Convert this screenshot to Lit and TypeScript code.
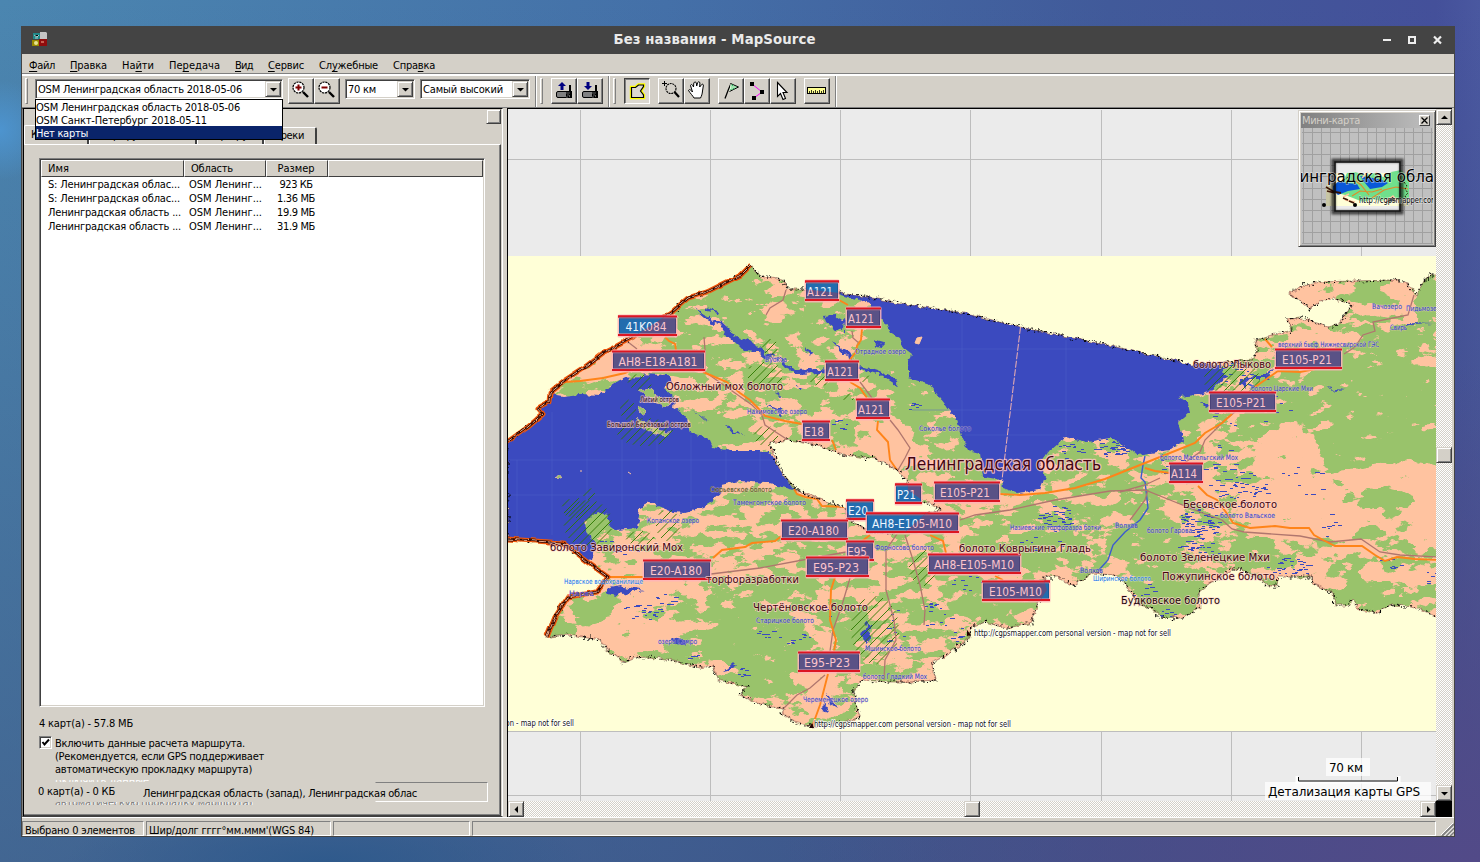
import { LitElement, html, svg, css } from "lit";
import { customElement, property, state, query } from "lit/decorators.js";
import { classMap } from "lit/directives/class-map.js";

/** A caption whose letter spacing is stretched so that it fills an exact width. */
@customElement("fit-text")
class FitText extends LitElement {
  static styles = css`
    :host { display: inline-block; white-space: pre; }
    span { display: inline-block; }
  `;
  @property({ type: Number }) w = 0;
  @state() private gap = 0;
  @query("span") private box!: HTMLSpanElement;
  firstUpdated() {
    const n = (this.textContent ?? "").length;
    if (this.w && n) this.gap = (this.w - this.box.getBoundingClientRect().width) / n;
  }
  render() {
    return html`<span style="letter-spacing:${this.gap}px"><slot></slot></span>`;
  }
}

const LAND = `M507 442L528 427 543 414 538 408 549 402 550 392 565 380 585 367 603 353 615 347 633 337 672 312 688 298 707 292 727 282 741 275 751 265
L760 276 783 280 787 289 803 289 840 293 877 299 917 306 963 313 1020 327 1077 339 1130 350 1180 362 1192 365 1252 360 1257 350 1255 340 1265 338 1292 330 1287 319 1302 318
1327 327 1338 325 1352 305 1333 298 1320 302 1310 308 1290 294 1302 285 1320 282 1353 281 1393 280 1408 284 1417 295 1423 282 1432 274 1440 274
L1440 618 1422 610 1407 606 1393 605 1375 613 1360 610 1352 600 1350 605 1335 605 1333 593 1313 584 1312 577 1278 577 1277 586 1267 586 1260 578 1240 569 1230 569
1228 573 1210 583 1198 593 1200 607 1182 618 1160 617 1152 608 1140 605 1120 577 1112 575 1093 573 1073 585 1057 577 1043 577 1047 590 1037 605 1032 623 1007 628 985 622
972 627 968 640 943 657 933 662 935 680 910 682 890 682 862 680 853 693 860 717 847 722 812 727 793 722 782 713 785 708 773 707 757 703 740 695 747 687 718 680 713 665
700 668 677 662 650 657 633 658 622 663 617 657 607 650 600 640 570 635 547 637L555 617 568 597 597 592 608 577 587 562 563 543 507 539Z`;
const CITY = "M770 443L788 440 810 443 843 455 877 459 897 470 907 480 908 490 922 500 941 509 925 514 905 532 870 532 853 522 845 508 817 498 797 490 780 470Z";
const GULF = "M500 445L528 427 543 414 538 408 549 402 552 394 563 396 580 394 600 395 612 385 620 380 633 374 668 375 672 382 664 389 674 398 673 408 685 415 690 432 710 440 713 447 730 451 770 451 780 470 795 490 765 483 740 481 722 485 720 495 703 508 685 513 673 512 650 503 640 508 637 528 617 530 609 524 607 515 597 512 583 523 588 535 597 542 592 560 587 562 563 543 500 539Z";
const LADOGA = "M838 294L870 303 872 312 886 323 890 332 900 338 904 348 912 354 908 366 908 378 930 385 947 407 957 420 963 440 968 450 980 453 983 477 1002 480 1003 488 1017 493 1040 490 1045 477 1040 463 1050 450 1065 437 1087 442 1110 438 1127 447 1137 455 1170 450 1183 440 1178 423 1190 413 1188 402 1178 397 1197 395 1210 392 1225 378 1222 366 1190 358 1130 346 1077 335 1020 323 963 309 917 302 877 295 840 289Z";
const BORDER_N = "M507 442L528 427 543 414 538 408 549 402 550 392 565 380 585 367 603 353 615 347 633 337 672 312 688 298 707 292 727 282 741 275 751 265";
const BORDER_S = "M547 637L555 617 568 597 597 592 608 577 587 562 563 543 507 539";

const LAKES = [
  "M694 309L713 320 722 322 736 336 748 341 758 344 768 354 776 357 767 358 757 351 744 350 737 343 727 336 720 325 705 319Z",
  "M776 357L787 362 795 370 820 369 840 371 862 366 878 371 892 377 898 385 894 384 880 375 861 369 840 374 820 373 797 374 785 367Z",
  "M704 307L712 310 720 311 719 313 707 311Z", "M822 316L836 315 846 322 845 330 834 329 824 322Z",
  "M690 408L708 422 704 420Z", "M727 427L743 435 732 433Z", "M834 343L850 352 854 360 840 350Z", "M873 341L884 344 883 348 874 346Z",
  "M803 347L812 351 810 356Z", "M775 391L784 397 778 395Z", "M796 385L804 388 799 389Z", "M766 404L780 410 782 416Z",
  "M606 588L620 585 640 589 644 590 625 593 616 598 606 595Z", "M873 624L868 630 872 640 865 644 862 636 866 624Z", "M672 637L688 640 684 645 676 644Z",
  "M722 671L731 664 735 668 728 670Z", "M1326 387L1333 389 1346 390 1336 391Z", "M1392 328L1405 326 1410 322 1433 323 1412 324Z", "M873 705L880 712 874 712Z",
  "M826 694L833 700 838 708 830 703Z", "M823 702L828 712 822 710Z", "M1200 402L1212 404 1206 408Z", "M1241 384L1255 375 1268 375 1272 368 1273 371 1268 378 1254 378 1243 388Z",
];
const ISLANDS = [
  "M627 371L645 372 640 377 630 377Z", "M640 390L650 388 662 398 672 402 668 406 656 404 650 398 643 396Z", "M638 405L644 410 643 416 638 411Z",
  "M637 420L650 425 655 430 671 432 665 435 655 432 641 426Z", "M554 477L560 475 562 478 557 480Z", "M652 429L660 433 655 433Z",
];

/** [cx, cy, rx, ry, forest density 0..1] */
const FOREST: number[][] = [
  [625, 358, 45, 14, 0], [650, 383, 30, 9, 0.1], [575, 393, 14, 7, 0.9], [600, 390, 14, 5, 0.6],
  [715, 307, 40, 14, 0.8], [745, 288, 22, 14, 0.9], [690, 345, 28, 22, 0.7], [760, 330, 35, 24, 0.75], [780, 300, 14, 18, 0.3], [815, 320, 22, 26, 0.7],
  [715, 355, 18, 12, 0.8], [725, 395, 38, 18, 0.55], [720, 432, 38, 17, 0.9], [768, 375, 28, 14, 0.65], [825, 400, 30, 18, 0.7], [770, 432, 20, 10, 0.2],
  [840, 360, 20, 12, 0.5], [850, 315, 18, 12, 0.7], [887, 355, 28, 34, 1], [920, 400, 26, 28, 0.9], [940, 435, 24, 28, 0.75], [968, 465, 18, 18, 0.9],
  [890, 445, 24, 24, 0.05], [920, 455, 14, 14, 0.3], [845, 432, 22, 10, 0.65], [1075, 460, 28, 20, 0.7], [1110, 480, 40, 14, 0.7], [1010, 500, 60, 12, 0.4],
  [745, 485, 30, 6, 0.3], [765, 500, 40, 10, 0.65], [660, 520, 22, 14, 0.3], [700, 535, 40, 14, 0.5], [597, 522, 14, 12, 1], [595, 545, 16, 8, 0.4],
  [640, 560, 40, 10, 0.3], [645, 590, 60, 12, 0.15], [630, 625, 55, 25, 0.1], [560, 630, 16, 10, 0.95], [590, 612, 20, 14, 0.95], [610, 600, 14, 8, 0.7], [660, 615, 24, 10, 0.5], [720, 605, 40, 16, 0.7],
  [740, 570, 25, 7, 0.35], [780, 585, 40, 14, 0.8], [680, 655, 35, 12, 0.75], [755, 640, 55, 32, 0.9], [765, 680, 28, 18, 0.9], [718, 668, 10, 8, 0.1],
  [820, 695, 16, 28, 0.1], [850, 700, 14, 18, 0.65], [825, 540, 30, 14, 0.55], [880, 590, 22, 20, 0.4], [850, 620, 18, 24, 0.75], [910, 610, 22, 28, 0.6],
  [950, 625, 24, 22, 0.5], [910, 665, 40, 10, 0.3], [885, 675, 30, 8, 0.8], [990, 605, 36, 14, 0.9], [960, 585, 24, 12, 0.75], [1000, 540, 34, 14, 0.7],
  [1050, 550, 40, 20, 0.8], [1075, 515, 35, 16, 0.65], [1020, 515, 30, 10, 0.65], [1110, 555, 14, 20, 0.3], [1150, 545, 45, 24, 0.85], [1170, 590, 35, 25, 0.9],
  [1150, 505, 30, 16, 0.65], [1205, 530, 34, 22, 0.5], [1250, 555, 45, 14, 0.8], [1205, 485, 30, 12, 0.3], [1215, 440, 24, 26, 0.5], [1195, 410, 16, 16, 0.95],
  [1240, 370, 24, 16, 0.55], [1280, 425, 40, 16, 0.85], [1300, 395, 50, 22, 0.8], [1360, 375, 46, 34, 0.85], [1400, 420, 60, 60, 0.9], [1350, 445, 34, 26, 0.95],
  [1305, 293, 22, 12, 0], [1370, 288, 20, 14, 0.9], [1395, 290, 12, 14, 0.2], [1430, 300, 14, 26, 0.9], [1355, 335, 18, 12, 0.85], [1325, 338, 36, 8, 0],
  [1400, 335, 22, 14, 0.85], [1385, 320, 18, 10, 0.4], [1289, 450, 30, 24, 0], [1295, 508, 50, 34, 0], [1360, 530, 30, 22, 0.1], [1400, 477, 60, 14, 0],
  [1425, 520, 18, 28, 0], [1385, 500, 28, 12, 0.9], [1370, 535, 18, 7, 0.85], [1320, 570, 24, 8, 0.2], [1395, 550, 20, 7, 0.75], [1370, 597, 50, 10, 0.9],
  [1300, 570, 18, 6, 0.4], [1400, 577, 40, 8, 0.2], [1345, 572, 16, 5, 0.7],
];

const ORANGE = [
  "565,382 580,381 603,378 625,373 640,366", "665,337 669,341 675,344 676,350", "703,372 727,382 740,393 750,400 757,407 765,416 785,421 802,424",
  "839,300 848,305", "862,329 861,340 857,346 856,352 848,362", "850,382 860,388 867,398", "878,421 877,430 888,442 890,460 897,470", "832,440 836,450",
  "1000,494 1020,495 1045,493 1075,488 1105,479 1140,465 1165,455 1195,443 1205,433 1222,423 1232,414", "1255,387 1265,380 1278,371 1300,372 1315,369",
  "1265,339 1272,347", "1145,468 1155,471 1170,473", "1198,486 1207,495 1217,500 1228,515 1233,523 1250,528 1275,526 1290,528 1309,528 1314,535 1325,541 1335,546 1362,546 1375,555 1385,561 1397,557 1415,559 1440,560",
  "608,577 643,577", "713,558 722,550 745,547 752,543 775,541 783,535", "794,489 797,494 805,497 817,499 822,506 846,507", "862,541 870,535",
  "930,535 943,541 946,553", "995,576 1003,580", "835,577 831,590 830,620 836,640 834,651", "828,674 820,705 812,727",
];
const RAIL = [
  "628,342 637,349", "704,337 705,350 705,372 735,393 752,405 762,415 765,425 788,440", "786,290 783,300 770,308 766,315", "852,331 853,338 860,344",
  "860,382 872,398", "890,420 898,430 910,448 905,458 898,470", "711,574 760,568 808,559 846,552", "850,578 842,605 833,630 830,651",
  "897,534 886,550 886,590 894,620 896,640 885,660 884,680", "782,710 797,695 810,688 825,675", "960,520 975,515 1010,510 1055,500 1110,491 1145,490 1170,500 1200,512 1222,520 1232,529 1244,532 1300,536 1330,542 1361,539 1380,552 1400,555 1440,557",
  "1175,470 1190,459 1200,452 1205,440 1225,420 1240,408", "1344,354 1355,347 1363,335 1375,331 1373,322 1408,315 1414,295", "1120,492 1145,485 1160,478", "1130,520 1145,500 1148,490",
  "905,535 913,560 920,585 925,610 924,625",
];

/** [cx, cy, rx, ry, dashes] marshes */
const MARSH: number[][] = [
  [640, 612, 22, 8, 22], [665, 600, 12, 6, 10], [915, 407, 7, 5, 9], [1110, 447, 18, 9, 45], [1070, 450, 12, 10, 12], [1055, 518, 18, 13, 40], [1200, 520, 20, 18, 70],
  [1200, 548, 22, 10, 26], [1290, 567, 24, 9, 34], [1220, 470, 30, 28, 30], [1240, 490, 28, 18, 36], [1235, 375, 26, 14, 22], [1250, 410, 40, 18, 14], [1040, 545, 24, 10, 8],
  [935, 615, 16, 14, 16], [970, 580, 20, 10, 12], [770, 635, 14, 8, 8], [800, 640, 14, 10, 9], [745, 672, 8, 5, 8], [692, 655, 6, 4, 5], [830, 610, 26, 10, 8], [840, 425, 8, 6, 6],
  [1330, 525, 12, 12, 8], [1390, 563, 14, 5, 8], [1140, 590, 14, 10, 10], [1165, 612, 10, 5, 10], [1430, 575, 6, 10, 5], [605, 545, 10, 6, 6], [625, 552, 14, 6, 8], [960, 635, 10, 8, 8],
  [1300, 480, 24, 22, 10], [895, 630, 12, 20, 10], [1175, 465, 20, 10, 8],
];
/** [cx, cy, rx, ry] nature reserves */
const HATCH: number[][] = [
  [645, 432, 28, 14], [640, 382, 12, 8], [628, 410, 8, 10], [765, 374, 18, 12], [770, 347, 8, 8], [766, 436, 12, 10], [588, 524, 24, 24], [576, 508, 14, 10], [640, 538, 14, 7], [668, 525, 12, 16],
  [875, 630, 24, 34], [925, 568, 16, 18], [1232, 380, 28, 20], [820, 380, 10, 6], [848, 397, 6, 4], [866, 379, 5, 4], [589, 494, 6, 6],
];

const SHIELDS: [number, number, number, string, number, number][] = [
  [618, 315, 59, "41K084", 625.5, 41], [612, 350, 93, "AH8-E18-A181", 618.5, 79], [805, 280, 34, "A121", 807, 26], [846, 307, 35, "A121", 848, 26],
  [825, 360, 34, "A121", 827, 26], [856, 398, 34, "A121", 858, 26], [802, 420, 28, "E18", 804, 20], [895, 483, 27, "P21", 897, 19], [934, 481, 66, "E105-P21", 940, 50],
  [846, 499, 28, "E20", 848, 20], [866, 512, 93, "AH8-E105-M10", 872, 80], [781, 519, 67, "E20-A180", 788, 51], [846, 540, 28, "E95", 847, 20], [806, 556, 63, "E95-P23", 813, 46],
  [928, 553, 93, "AH8-E105-M10", 934, 80], [982, 580, 68, "E105-M10", 989, 53], [643, 559, 68, "E20-A180", 650, 52], [798, 651, 62, "E95-P23", 804, 46],
  [1169, 462, 34, "A114", 1171, 26], [1209, 391, 67, "E105-P21", 1216, 50], [1275, 348, 67, "E105-P21", 1282, 50],
];

/** [x, baseline, width, text, class] */
const LABELS: [number, number, number, string, string][] = [
  [765, 362, 22, "Вуокса", "s"], [747, 414, 60, "Нахимовское озеро", "s"], [855, 354, 51, "Отрадное озеро", "s"], [919, 431, 52, "Соколье болото", "s"],
  [710, 492, 62, "Сюрьевское болото", "s o"], [733, 505, 73, "Таменгонтское болото", "s"], [647, 523, 52, "Копанское озеро", "s"], [640, 402, 39, "Лисий остров", "s d"],
  [607, 427, 84, "Большой Берёзовый остров", "s d"], [564, 584, 79, "Нарвское водохранилище", "s b"], [569, 596, 25, "Нарва", "s"], [658, 644, 39, "озеро Самро", "s"],
  [756, 623, 58, "Старицкое болото", "s"], [803, 702, 65, "Череменецкое озеро", "s"], [863, 679, 64, "болото Гладкий Мох", "s"], [865, 651, 56, "Мшинское болото", "s"],
  [875, 550, 59, "Форносово болото", "s"], [1010, 530, 91, "Назиевские торфоразра ботки", "s"], [1115, 528, 23, "Волхов", "s"], [1080, 573, 23, "Волхов", "s"],
  [1093, 581, 58, "Ширинское болото", "s b"], [1147, 533, 45, "болото Гарова", "s"], [1220, 518, 55, "болото Вальское", "s"], [1160, 460, 78, "болото Масельгский Мох", "s"],
  [1251, 391, 62, "болото Царские Мхи", "s"], [1278, 347, 101, "верхний бьеф Нижнесвирской ГЭС", "s"], [1372, 309, 30, "Вачозеро", "s"], [1406, 311, 38, "Пидьмозеро", "s"], [1390, 330, 17, "Свирь", "s"],
  [666, 390, 117, "Обложный мох болото", "m"], [1193, 368, 78, "болото Лыково", "m"], [1183, 508, 94, "Бесовское болото", "m"], [959, 552, 132, "болото Коврыгина Гладь", "m"],
  [1140, 561, 130, "болото Зеленецкие Мхи", "m"], [1162, 580, 113, "Пожупинское болото", "m"], [1121, 604, 99, "Будковское болото", "m k"], [550, 551, 133, "болото Завиронский Мох", "m"],
  [706, 583, 93, "торфоразработки", "m"], [753, 611, 115, "Чертёновское болото", "m"],
];
const URL_NOTE = "http://cgpsmapper.com personal version - map not for sell";

function random(seed: number) {
  let s = seed;
  return () => ((s = (s * 16807) % 2147483647) / 2147483647);
}
function marshPath() {
  const r = random(41);
  let d = "";
  for (const [cx, cy, rx, ry, n] of MARSH)
    for (let i = 0; i < n; i++) {
      const a = r() * 6.283, q = Math.sqrt(r());
      d += `M${Math.round(cx + Math.cos(a) * q * rx)} ${Math.round(cy + Math.sin(a) * q * ry) + 0.5}h${2 + Math.round(r() * 3)}`;
    }
  return d;
}
/** Diagonals x + y = c, each cut to the ellipse of its reserve. */
function hatchPath() {
  let d = "";
  for (const [cx, cy, rx, ry] of HATCH) {
    const A = 1 / rx ** 2 + 1 / ry ** 2;
    for (let c = -rx - ry; c < rx + ry; c += 8.5) {
      const h = c / 2, B = 2 * h * (1 / rx ** 2 - 1 / ry ** 2), C = h * h * A - 1, D = B * B - 4 * A * C;
      if (D <= 0) continue;
      const s1 = (-B - Math.sqrt(D)) / (2 * A), s2 = (-B + Math.sqrt(D)) / (2 * A);
      d += `M${(cx + h + s1).toFixed(1)} ${(cy + h - s1).toFixed(1)}L${(cx + h + s2).toFixed(1)} ${(cy + h - s2).toFixed(1)}`;
    }
  }
  return d;
}

@customElement("map-canvas")
class MapCanvas extends LitElement {
  static styles = css`
    :host { display: block; width: 928px; height: 692px; }
    svg { display: block; }
    text { font-family: "DejaVu Sans", sans-serif; paint-order: stroke; stroke-linejoin: round; }
    .s { font-size: 7.4px; fill: #2c3cd0; stroke: #f6cfc0; stroke-width: 1px; stroke-opacity: 0.5; }
    .s.o { fill: #4a4a10; }
    .s.d { fill: #200008; stroke: #ffd0c8; stroke-width: 2px; stroke-opacity: 0.7; }
    .s.b { fill: #1070e8; stroke: #ffffff; }
    .m { font-size: 10.8px; fill: #42040f; stroke: #ffd5d0; stroke-width: 1.8px; stroke-opacity: 0.7; }
    .m.k { fill: #1c0508; }
    .big { font-size: 16.8px; fill: #42040f; stroke: #ffc8c8; stroke-width: 2.4px; stroke-opacity: 0.85; }
    .note { font-family: "DejaVu Sans Condensed", "DejaVu Sans", sans-serif; font-size: 8.8px; fill: #111; stroke: #fff; stroke-width: 1.6px; }
    .road { font-size: 12.4px; fill: #fcc4cc; }
    .road.out { fill: #eef6ff; }
    .scale { font-size: 12px; fill: #000; }
  `;
  private shield(s: (typeof SHIELDS)[number], out: boolean) {
    const [x, y, w, t, tx, tw] = s;
    return svg`
      ${out ? "" : svg`<rect x=${x - 0.5} y=${y - 0.5} width=${w + 1} height="23" rx="1.5" fill="#ffb4b8" opacity=".85"/>`}
      <rect x=${x + 1} y=${y + 1} width=${w - 2} height="20" fill=${out ? "#226cae" : "#5a5286"}/>
      <rect x=${x + 1.5} y=${y + 3.5} width=${w - 3} height="15" fill="none" stroke=${out ? "#185890" : "#463e74"} opacity=".8"/>
      <path d="M${x} ${y + 1.5}h${w}M${x} ${y + 20}h${w}" stroke="#dc1622" stroke-width="2"/>
      <path d="M${x + 1} ${y + 3}h${w - 2}M${x + 1} ${y + 18.5}h${w - 2}" stroke="#e8a0b0" stroke-opacity=".55" stroke-width="1"/>
      <text class="road ${out ? "out" : ""}" x=${tx} y=${y + 16} textLength=${tw} lengthAdjust="spacingAndGlyphs">${t}</text>`;
  }
  render() {
    return html`<svg width="928" height="692" viewBox="508 109 928 692">
      <defs>
        <filter id="forest" filterUnits="userSpaceOnUse" x="508" y="256" width="928" height="475" color-interpolation-filters="sRGB">
          <feGaussianBlur in="SourceGraphic" stdDeviation="3.500"/>
          <feColorMatrix values="0 0 0 0 0 0 0 0 0 0 0 0 0 0 0 1 0 0 0 0" result="d"/>
          <feTurbulence type="fractalNoise" baseFrequency="0.055 0.095" numOctaves="5" seed="11"/>
          <feColorMatrix values="0 0 0 0 0 0 0 0 0 0 0 0 0 0 0 1 0 0 0 0" result="n"/>
          <feComposite operator="arithmetic" in="d" in2="n" k1="0" k2=".62" k3="1" k4="-.32"/>
          <feComponentTransfer result="cut"><feFuncA type="linear" slope="22" intercept="-10.5"/></feComponentTransfer>
          <feFlood flood-color="#99c36b"/>
          <feComposite operator="in" in2="cut"/>
        </filter>
        <filter id="jag" filterUnits="userSpaceOnUse" x="508" y="256" width="928" height="475" color-interpolation-filters="sRGB">
          <feTurbulence type="fractalNoise" baseFrequency=".16" numOctaves="2" seed="5"/>
          <feDisplacementMap in="SourceGraphic" scale="6" xChannelSelector="R" yChannelSelector="G"/>
        </filter>
        <filter id="jag2" filterUnits="userSpaceOnUse" x="508" y="256" width="928" height="475" color-interpolation-filters="sRGB">
          <feTurbulence type="fractalNoise" baseFrequency=".13" numOctaves="3" seed="9"/>
          <feDisplacementMap in="SourceGraphic" scale="9" xChannelSelector="R" yChannelSelector="G"/>
        </filter>
        <filter id="jag3" filterUnits="userSpaceOnUse" x="508" y="256" width="928" height="475" color-interpolation-filters="sRGB">
          <feTurbulence type="fractalNoise" baseFrequency=".08" numOctaves="2" seed="3"/>
          <feDisplacementMap in="SourceGraphic" scale="4" xChannelSelector="R" yChannelSelector="G"/>
        </filter>
        <clipPath id="sheet"><rect x="508" y="256" width="928" height="475"/></clipPath>
        <clipPath id="outside"><path clip-rule="evenodd" d="M400 200H1500V800H400Z ${LAND} ${CITY}"/></clipPath>
      </defs>
      <rect x="508" y="109" width="928" height="692" fill="#ebebeb"/>
      <path d="M580.5 110V801M710.5 110V801M840.5 110V801M970.5 110V801M1101.5 110V801M1231.5 110V801M1361.5 110V801M508 159.500H1436M508 731.500H1436M508 795.500H1436" stroke="#bdbdbd" fill="none"/>
      <g clip-path="url(#sheet)">
        <rect x="508" y="256" width="928" height="475" fill="#ffc3a0"/>
        <g filter="url(#forest)">
          <rect x="500" y="250" width="940" height="490" fill="rgb(122,122,122)"/>
          ${FOREST.map(([cx, cy, rx, ry, v]) => svg`<ellipse cx=${cx} cy=${cy} rx=${rx} ry=${ry} fill="rgb(${v * 255},${v * 255},${v * 255})"/>`)}
        </g>
        <g filter="url(#jag)">
          <g fill="#3b4abf"><path d=${GULF}/><path d=${LADOGA}/></g>
        </g>
        <g filter="url(#jag2)">
          ${LAKES.map((d) => svg`<path d=${d} fill="#3b4abf"/>`)}
          ${ISLANDS.map((d) => svg`<path d=${d} fill="#99c36b" stroke="#ffc3a0" stroke-width=".6"/>`)}
        </g>
        <path d="M517 460V535M552 412V535M587 398V510M622 440V525M657 440V505M691 435V508M726 450V480M760 451V480M508 460H775M508 495H715M870 306V320M962 316V430M1066 340V436M915 349H1120M912 410H1180M965 435H1060" stroke="#5161c8" stroke-opacity=".45" fill="none"/>
        <path d="M917 338l5-1-3 7-4-1zM580 471h2M628 472l3 2" fill="#ffc3a0" stroke="#ffc3a0"/>
        <path d="M1020.500 327L1002 480" stroke="#f3b3b0" stroke-dasharray="7 1.500" fill="none"/>
        <path d="M1145 456L1143 465 1141 478 1145 482 1146 490M1146 490L1148 508 1140 520 1125 532 1113 545 1108 560 1098 571M1255 387L1248 384" stroke="#3b5ad0" stroke-width="1.400" fill="none"/>
        <path d=${marshPath()} stroke="#3b4abf" fill="none" shape-rendering="crispEdges"/>
        <path d=${hatchPath()} stroke="#2c7800" fill="none" stroke-width=".9"/>
        ${RAIL.map((p) => svg`<polyline points=${p} fill="none" stroke="#b0766e" stroke-width="1.300"/>`)}
        ${ORANGE.map((p) => svg`<polyline points=${p} fill="none" stroke="#ff8419" stroke-width="1.900"/>`)}
        <g filter="url(#jag)">
          <path fill-rule="evenodd" fill="#ffffd7" d="M400 200H1500V800H400Z ${LAND}"/>
          <path fill="#ffffd7" d=${CITY}/>
          <g fill="none" stroke="#7a3a3a" stroke-opacity=".5" stroke-width="1.100"><path d=${LAND}/><path d=${CITY}/></g>
        </g>
        <g filter="url(#jag2)" fill="none" stroke="#000" stroke-dasharray="1.800 2.400" stroke-width="1.100"><path d=${LAND}/><path d=${CITY}/></g>
        <g filter="url(#jag3)" fill="none" stroke-linejoin="round">
          <g stroke="#f0560c" stroke-width="5"><path d=${BORDER_N}/><path d=${BORDER_S}/></g>
          <g stroke="#300800" stroke-width="2.400"><path d=${BORDER_N}/><path d=${BORDER_S}/></g>
          <g stroke="#ffc0a0" stroke-width=".9" stroke-dasharray="6 2"><path d=${BORDER_N}/><path d=${BORDER_S}/></g>
        </g>
        ${SHIELDS.map((s) => svg`${this.shield(s, false)}<g clip-path="url(#outside)">${this.shield(s, true)}</g>`)}
        ${LABELS.map(([x, y, w, t, c]) => svg`<text class=${c} x=${x} y=${y} textLength=${w} lengthAdjust="spacingAndGlyphs">${t}</text>`)}
        <text class="big" x="905" y="470" textLength="196" lengthAdjust="spacingAndGlyphs">Ленинградская область</text>
        ${[[974, 636], [814, 727], [377, 726]].map(([x, y]) => svg`<text class="note" x=${x} y=${y} textLength="197" lengthAdjust="spacingAndGlyphs">${URL_NOTE}</text>`)}
        <path d="M967 630l4 5-4 1zM809 728l3-5 2 5z" fill="#200"/>
      </g>
      <rect x="1326" y="758" width="44" height="18" fill="#fff" opacity=".75"/>
      <rect x="1265" y="782" width="166" height="18" fill="#fff" opacity=".75"/>
      <path d="M1297 776v6h102v-6" fill="none" stroke="#fff" stroke-width="3"/>
      <path d="M1298.500 777v4h99v-4" fill="none" stroke="#000"/>
      <text class="scale" x="1329" y="772" textLength="34">70 км</text>
      <text class="scale" x="1268" y="796" textLength="152">Детализация карты GPS</text>
    </svg>`;
  }
}

@customElement("mini-map")
class MiniMap extends LitElement {
  static styles = css`
    :host { display: flex; flex-direction: column; box-sizing: border-box; width: 138px; height: 137px; padding: 1px; background: #d4d0c8;
      border: 1px solid; border-color: #d4d0c8 #404040 #404040 #d4d0c8; box-shadow: inset 1px 1px #fff, inset -1px -1px #808080; }
    .cap { display: flex; align-items: center; justify-content: space-between; box-sizing: border-box; height: 15px; margin: 1px 1px 0; padding: 0 3px 0 1px;
      background: linear-gradient(90deg, #808080, #c0c0c0); color: #d4d0c8; font: 11px/14px "DejaVu Sans Condensed", "DejaVu Sans", sans-serif; }
    .close { display: grid; place-items: center; width: 9px; height: 9px; background: #d4d0c8; border: 1px solid; border-color: #fff #404040 #404040 #fff; }
    svg { display: block; }
    .pic { margin: 0 1px; }
    text { font-family: "DejaVu Sans", sans-serif; paint-order: stroke; }
    .big { font-size: 16.500px; stroke: #fff; stroke-opacity: .5; stroke-width: 1.500px; }
    .url { font-family: "DejaVu Sans Condensed", "DejaVu Sans", sans-serif; font-size: 8.600px; stroke: #fff; stroke-opacity: .6; stroke-width: 1px; }
  `;
  render() {
    let g = "";
    for (let i = 0; i < 15; i++) g += `M${1303.5 + Math.round(i * 9.15)} 128V244`;
    for (let i = 0; i < 11; i++) g += `M1302 ${132.5 + Math.round(i * 11.1)}H1433`;
    return html`<div class="cap"><fit-text w="58">Мини-карта</fit-text><span class="close"><svg width="7" height="7" viewBox="0 0 7 7"><path d="M.5 .5L6.500 6.500M6.500 .5L.5 6.500" stroke="#000" stroke-width="1.300"/></svg></span></div>
      <svg class="pic" width="132" height="117" viewBox="1301 128 132 117">
        <defs><filter id="b" x="-30%" y="-30%" width="160%" height="160%"><feGaussianBlur stdDeviation="1.200"/></filter></defs>
        <rect x="1301" y="128" width="132" height="117" fill="#c0c0c0"/>
        <path d=${g} stroke="#a0a0a0" fill="none"/>
        <path d="M1326 184h83v22h-83z" fill="#c8c6a4"/>
        <path d="M1335 162h65v49h-65z" fill="#ebebeb"/>
        <path d="M1335 173h65v33h-65z" fill="#ffffd7"/>
        <path d="M1347 173l8-1 10 3 10-2 8 4 8-5 10-2 8 8v20l-12 2-6-3-10 4-8-2-10 3-10-4-8-3-8-2-2-8 8-4z" fill="#70e08c"/>
        <path d="M1333 186l6-5 8 2 10 1 3 5-12 2-10 4-5-5zM1360 176l8 1 14 3 6 3-6 4-12 2-5-6z" fill="#0a58d8"/>
        <path d="M1352 196l8-5 12 1 10-3M1355 180l6 5 8 10M1372 198l12-8 12-3 12 2" fill="none" stroke="#e08a28" stroke-width="1.200"/>
        <path d="M1345 200l10 2M1362 178l6-6M1385 202l8-6 4 5M1376 172l4 4M1343 197l6-3" stroke="#ffc8a0" stroke-width="1.500"/>
        <path d="M1326 187l5 3 4 2 6 1M1327 191l8 2M1343 198l5 2M1349 201l5 2" fill="none" stroke="#3c1404" stroke-width="1.800"/>
        <path d="M1404 182l3 4-2 3 3 4-3 3 2 3M1348 177l-8 6" fill="none" stroke="#2c1404" stroke-dasharray="2 1.500"/>
        <rect x="1333.500" y="160.500" width="68" height="52" fill="none" stroke="#000" stroke-width="4" opacity=".65" filter="url(#b)"/>
        <rect x="1335" y="162" width="65" height="49" fill="none" stroke="#111" stroke-width="1.500"/>
        <circle cx="1324" cy="205" r="2"/><circle cx="1355" cy="205" r="2"/>
        <text class="big" x="1269" y="182" textLength="191" lengthAdjust="spacingAndGlyphs">Ленинградская область</text>
        <text class="url" x="1359" y="203" textLength="197" lengthAdjust="spacingAndGlyphs">${URL_NOTE}</text>
      </svg>`;
  }
}

const lens = (plus: boolean) => svg`<circle cx="9.500" cy="8.500" r="5.500" fill="#fff" stroke="#000" stroke-width="1.200" stroke-dasharray="2.200 .7"/><path d="M14 13l5 5" stroke="#000" stroke-width="2.400"/><path d=${plus ? "M6.500 8.500h6M9.500 5.500v6" : "M6.500 8.500h6"} stroke="#800000" stroke-width="2"/>`;
const gps = (up: boolean) => svg`<rect x="4.500" y="12.500" width="14" height="6" rx="1.500" fill="#808080" stroke="#000" stroke-width="1"/><path d="M14 12h6v7h-6zM17 6h2v7h-2z" fill="#000"/><path d="M14.500 14h1M16.500 14h1M15.500 16h1M14.500 18h1M17 17h1" stroke="#c0c0c0"/><path d=${up ? "M10 3l4 4h-2.500v4h-3v-4H6z" : "M10 11l4-4h-2.500V3h-3v4H6z"} fill="#000080"/>`;
const ICONS: Record<string, unknown> = {
  zin: lens(true), zout: lens(false), up: gps(true), down: gps(false),
  area: svg`<path d="M6.500 8.500h4l3-2.500h5v1.500l-3 4.500 3 4v2.500h-12z" fill="none" stroke="#ff0" stroke-width="3.400"/><path d="M6.500 8.500h4l3-2.500h5v1.500l-3 4.500 3 4v2.500h-12z" fill="#dcd8d0" stroke="#000" stroke-width="1.200"/>`,
  zoom: svg`<path d="M3 4.500h5M5.500 2v5" stroke="#000"/><circle cx="12" cy="9.500" r="5" fill="none" stroke="#000" stroke-width="1.100" stroke-dasharray="2 .7"/><path d="M15.500 13l4.500 5" stroke="#000" stroke-width="2.200"/>`,
  hand: svg`<path d="M8 19c-1-2-4-5-5.500-7.500.5-1.500 2-1 4 1.500L4.500 6.500C5 5 6.500 5.200 7.500 8L7.800 4c.7-1.500 2.200-1.200 2.500 0l.4 3 1-3.500c.8-1.200 2-.8 2.200.5l-.2 4 2-2.500c1-.8 2 0 1.600 1.500L16.500 12c-.2 3-1 5-2 7z" transform="translate(1)" fill="#fff" stroke="#000" stroke-width="1"/>`,
  flag: svg`<path d="M6 19.500C8 14 10 9 12 4.500" fill="none" stroke="#000" stroke-width="1.300"/><path d="M11.500 4.500l8 3.500-9 4.500" fill="#d8ffd8" stroke="#000" stroke-width="1"/><path d="M12.500 7h1M14.500 8h1M16.500 8h1M12.500 9h1M13 6h1M11.500 10.500h1M14 9.800h1" stroke="#00a040" stroke-width="1.200"/>`,
  route: svg`<path d="M7 5l10 8-8 6" fill="none" stroke="#f0f" stroke-width="1"/><path d="M5 3h4v4H5zM15 11h4v4h-4zM7 17h4v4H7z" fill="#000"/>`,
  arrow: svg`<path d="M6.500 3.500v14l3-3 2.500 6 2.500-1-2.500-6h4z" fill="#fff" stroke="#000" stroke-width="1.100"/>`,
  ruler: svg`<rect x="2.500" y="8.500" width="18" height="6" fill="#ffff90" stroke="#000" stroke-width="1"/><path d="M4.500 14v-2M6.500 14v-3M8.500 14v-2M10.500 14v-3M12.500 14v-2M14.500 14v-3M16.500 14v-2M18.500 14v-3" stroke="#000" stroke-opacity=".8"/>`,
};
const icon = (name: string) => html`<svg width="24" height="24" viewBox="0 0 24 24">${ICONS[name]}</svg>`;
const arrow = (d: string) => html`<svg width="9" height="9" viewBox="0 0 9 9"><path d=${d}/></svg>`;
const DOWN = "M1 3h7L4.500 6.500z", UP = "M1 6h7L4.500 2.500z", LEFT = "M6 1v7L2.500 4.500z", RIGHT = "M3 1v7L6.500 4.500z";

@customElement("app-root")
class AppRoot extends LitElement {
  static styles = css`
    :host { display: block; box-sizing: border-box; width: 1480px; height: 862px; padding: 26px 25px 25px 21px; overflow: hidden; color: #000;
      font: 11px/13px "DejaVu Sans Condensed", "DejaVu Sans", sans-serif;
      background:
        radial-gradient(circle at 0 130px, #4d94cf 0, #4d94cf00 50px),
        radial-gradient(ellipse 260px 60px at 22% 100%, #2f5a8c 0, #2f5a8c00 100%),
        radial-gradient(ellipse 700px 500px at 100% 100%, #524a88 0, #524a8800 100%),
        linear-gradient(180deg, #0000 0, #3a4a7888 100%),
        linear-gradient(90deg, #4b86b0 0, #4470a8 45%, #415a9a 75%, #44509a 97%, #4a58a0 100%); }
    svg { display: block; }
    .win { box-sizing: border-box; width: 1434px; height: 811px; display: flex; flex-direction: column; border: 1px solid #444; border-top: 0; background: #d4d0c8; }
    .title { display: grid; grid-template-columns: 88px 1fr 134px; align-items: center; height: 28px; background: #444; color: #eaeaea; flex: none; }
    .title .name { text-align: center; font: bold 13.300px/28px "DejaVu Sans", sans-serif; padding-right: 1px; }
    .logo { margin-left: 10px; }
    .ctl { margin-left: 63px; }
    .menu { display: flex; height: 20px; padding: 5px 0 0 7px; box-sizing: border-box; gap: 15px; border-bottom: 1px solid #808080; flex: none; }
    .menu u { text-underline-offset: 2px; }
    .bar { display: flex; height: 34px; box-sizing: border-box; border-top: 2px solid #fff; border-bottom: 1px solid #808080; flex: none; }
    .band { display: flex; align-items: flex-start; box-sizing: border-box; padding: 2px 0 0 3px; border-right: 1px solid #808080; box-shadow: 1px 0 #fff; }
    .band.b1 { width: 514px; } .band.b2 { width: 73px; } .band.b3 { width: 227px; }
    .band.b2, .band.b3 { padding-left: 4px; }
    .grip { width: 1px; height: 24px; margin-right: 7px; border: 1px solid; border-color: #fff #808080 #808080 #fff; flex: none; }
    .b2 .grip, .b3 .grip { margin-right: 8px; }
    .combo { display: flex; box-sizing: border-box; height: 20px; margin-top: 1px; background: #fff; border: 1px solid; border-color: #808080 #fff #fff #808080; box-shadow: inset 1px 1px #404040, inset -1px -1px #d4d0c8; padding: 1px 1px 1px 2px; justify-content: space-between; line-height: 17px; }
    .c1 { width: 248px; margin-right: 5px; } .c2 { width: 70px; margin: 1px 5px 0 5px; } .c3 { width: 110px; }
    .btn { display: grid; place-items: center; box-sizing: border-box; width: 16px; height: 16px; background: #d4d0c8; border: 1px solid; border-color: #d4d0c8 #404040 #404040 #d4d0c8; box-shadow: inset 1px 1px #fff, inset -1px -1px #808080; flex: none; }
    .tool { box-sizing: border-box; width: 26px; height: 26px; background: #d4d0c8; border: 1px solid; border-color: #fff #404040 #404040 #fff; box-shadow: inset -1px -1px #808080; flex: none; }
    .tool.on { border-color: #404040 #fff #fff #404040; box-shadow: inset 1px 1px #808080; background: #dcd8d0; }
    .gap { margin-left: 8px; }
    .main { display: flex; height: 709px; flex: none; }
    .left { box-sizing: border-box; width: 481px; border: 1px solid; border-color: #000 #fff #404040 #808080; box-shadow: inset 1px 0 #000; padding-left: 1px; margin-right: 4px; }
    .top { display: flex; justify-content: flex-end; height: 16px; padding-right: 1px; }
    .top .btn { width: 15px; height: 15px; }
    .tabs { display: flex; align-items: flex-end; height: 19px; }
    .tab { box-sizing: border-box; height: 17px; border-right: 2px solid #404040; border-top: 1px solid #fff; border-left: 1px solid #fff; border-radius: 2px 2px 0 0; padding: 1px 0 0 10px; }
    .tab.act { height: 19px; width: 65px; padding: 2px 0 0 6px; } .t2 { width: 108px; } .t3 { width: 67px; padding-left: 8px; } .t4 { width: 53px; }
    .page { display: flex; flex-direction: column; box-sizing: border-box; height: 672px; margin-right: 1px; padding: 13px 0 0 15px; border-top: 1px solid #fff; border-right: 1px solid #404040; border-bottom: 1px solid #404040; box-shadow: inset -1px -1px #808080; }
    .list { display: flex; flex-direction: column; box-sizing: border-box; width: 446px; height: 549px; background: #fff; border: 1px solid; border-color: #808080 #fff #fff #808080; box-shadow: inset 1px 1px #404040, inset -1px -1px #d4d0c8; padding: 1px; flex: none; }
    .row { display: grid; grid-template-columns: 143px 82px 62px 1fr; height: 14px; line-height: 14px; }
    .row span:nth-child(1) { padding-left: 7px; } .row span:nth-child(2) { padding-left: 5px; } .row span:nth-child(3) { text-align: center; padding-right: 2px; }
    .row.head { height: 17px; line-height: 14px; margin-bottom: 1px; }
    .row.head span { background: #d4d0c8; border: 1px solid; border-color: #fff #404040 #404040 #fff; padding-top: 1px; box-sizing: border-box; height: 17px; }
    .row.head span:nth-child(1) { padding-left: 6px; } .row.head span:nth-child(2) { padding-left: 6px; }
    .count { margin-top: 10px; height: 13px; flex: none; padding-left: 0; }
    .route { display: flex; gap: 3px; margin-top: 7px; height: 39px; flex: none; }
    .check { box-sizing: border-box; width: 13px; height: 13px; margin-top: -1px; background: #fff; border: 1px solid; border-color: #808080 #fff #fff #808080; box-shadow: inset 1px 1px #404040, inset -1px -1px #d4d0c8; }
    .ghost { height: 2px; overflow: hidden; color: #fff; padding-left: 16px; line-height: 2px; margin-top: 4px; flex: none; }
    .foot { display: flex; height: 20px; margin: 0 12px 0 -1px; flex: none; }
    .foot .sum { width: 105px; padding-top: 3px; }
    .foot .name { width: 232px; padding-top: 5px; white-space: nowrap; }
    .foot .box { flex: 1; border: 1px solid; border-color: #808080 #fff #fff transparent; box-sizing: border-box; }
    .ghost2 { height: 3px; overflow: hidden; color: #808080; text-shadow: 1px 1px #fff; padding-left: 16px; line-height: 2px; flex: none; }
    .mapbox { display: grid; grid-template: 692px 16px / 928px 16px; box-sizing: border-box; width: 945px; border-left: 1px solid #000; border-top: 1px solid #000; background: #d4d0c8; }
    .track { background: repeating-conic-gradient(#fff 0 25%, #d4d0c8 0 50%) 0 0 / 2px 2px; display: flex; justify-content: space-between; }
    .track.v { flex-direction: column; }
    .corner { background: #000; }
    .status { display: grid; grid-template-columns: 122px 185px 137px 964px; gap: 2px; box-sizing: border-box; height: 19px; padding-top: 3px; border-top: 1px solid #fff; position: relative; flex: none; }
    .cell { box-sizing: border-box; height: 15px; border: 1px solid; border-color: #808080 #fff #fff #808080; line-height: 17px; padding-left: 2px; white-space: nowrap; }
    .resize { position: absolute; right: 0; bottom: 0; }
    .drop { position: absolute; left: 35px; top: 99px; width: 246px; border: 1px solid #000; background: #fff; height: 39px; }
    .drop div { height: 13px; line-height: 15px; overflow: hidden; }
    .drop .sel { background: #0a246a; color: #fff; }
    .mini { position: absolute; left: 1298px; top: 110px; }
  `;
  @state() private tool = "area";
  private files = [
    ["S: Ленинградская облас...", "OSM Ленинг...", "923 КБ", 132, 33],
    ["S: Ленинградская облас...", "OSM Ленинг...", "1.36 МБ", 132, 38],
    ["Ленинградская область ...", "OSM Ленинг...", "19.9 МБ", 133, 38],
    ["Ленинградская область ...", "OSM Ленинг...", "31.9 МБ", 133, 38],
  ] as [string, string, string, number, number][];
  private button(name: string, gap = false) {
    return html`<div class=${classMap({ tool: true, gap, on: this.tool === name })}>${icon(name)}</div>`;
  }
  render() {
    return html`<div class="win">
      <div class="title">
        <svg class="logo" width="16" height="16" viewBox="0 0 16 16"><rect x="1" y="1" width="7" height="6" fill="#208888"/><path d="M2 3l3 2 2-2M3 6h3" stroke="#a8d0d0"/><path d="M8 0h6l1 1v6H8z" fill="#c4c4c4"/><rect x="0" y="8" width="7" height="6" fill="#988a00"/><circle cx="4" cy="11" r="2" fill="#e8e490"/><rect x="7" y="7" width="8" height="7" fill="#900c0c"/><path d="M9 9h3v2H9z" fill="#c86050"/></svg>
        <div class="name"><fit-text w="202">Без названия - MapSource</fit-text></div>
        <svg class="ctl" width="62" height="16" viewBox="0 0 62 16"><path d="M0 8h8" stroke="#eee" stroke-width="2"/><rect x="26" y="5" width="6" height="6" fill="none" stroke="#eee" stroke-width="2"/><path d="M51 4.500l7 7M58 4.500l-7 7" stroke="#eee" stroke-width="2.200"/></svg>
      </div>
      <div class="menu">
        <fit-text w="26"><u>Ф</u>айл</fit-text><fit-text w="37"><u>П</u>равка</fit-text><fit-text w="32">На<u>й</u>ти</fit-text><fit-text w="51">Пе<u>р</u>едача</fit-text><fit-text w="18"><u>В</u>ид</fit-text><fit-text w="36"><u>С</u>ервис</fit-text><fit-text w="59">Сл<u>у</u>жебные</fit-text><fit-text w="42">Спра<u>в</u>ка</fit-text>
      </div>
      <div class="bar">
        <div class="band b1"><i class="grip"></i>
          <div class="combo c1"><fit-text w="204">OSM Ленинградская область 2018-05-06</fit-text><span class="btn">${arrow(DOWN)}</span></div>
          ${this.button("zin")}${this.button("zout")}
          <div class="combo c2"><fit-text w="28">70 км</fit-text><span class="btn">${arrow(DOWN)}</span></div>
          <div class="combo c3"><fit-text w="80">Самый высокий</fit-text><span class="btn">${arrow(DOWN)}</span></div>
        </div>
        <div class="band b2"><i class="grip"></i>${this.button("up")}${this.button("down")}</div>
        <div class="band b3"><i class="grip"></i>${this.button("area")}${this.button("zoom", true)}${this.button("hand")}${this.button("flag", true)}${this.button("route")}${this.button("arrow")}${this.button("ruler", true)}</div>
      </div>
      <div class="main">
        <div class="left">
          <div class="top"><span class="btn"></span></div>
          <div class="tabs"><div class="tab act">Карты</div><div class="tab t2"><fit-text w="88">Маршрутные точки</fit-text></div><div class="tab t3">Маршруты</div><div class="tab t4"><fit-text w="29">Треки</fit-text></div></div>
          <div class="page">
            <div class="list">
              <div class="row head"><span><fit-text w="21">Имя</fit-text></span><span><fit-text w="42">Область</fit-text></span><span><fit-text w="37">Размер</fit-text></span><span></span></div>
              ${this.files.map(([a, b, c, wa, wc]) => html`<div class="row"><span><fit-text w=${wa}>${a}</fit-text></span><span><fit-text w="73">${b}</fit-text></span><span><fit-text w=${wc}>${c}</fit-text></span></div>`)}
            </div>
            <div class="count"><fit-text w="94">4 карт(а) - 57.8 МБ</fit-text></div>
            <div class="route"><span class="check"><svg width="11" height="11" viewBox="0 0 11 11"><path d="M2.500 5L4.500 7.500 9 2.500" fill="none" stroke="#000" stroke-width="2"/></svg></span>
              <div><fit-text w="190">Включить данные расчета маршрута.</fit-text><br><fit-text w="209">(Рекомендуется, если GPS поддерживает</fit-text><br><fit-text w="197">автоматическую прокладку маршрута)</fit-text></div>
            </div>
            <div class="ghost">Включить данные</div>
            <div class="foot"><div class="sum"><fit-text w="77">0 карт(а) - 0 КБ</fit-text></div><div class="name"><fit-text w="274">Ленинградская область (запад), Ленинградская облас</fit-text></div><div class="box"></div></div>
            <div class="ghost2"><fit-text w="197">автоматическую прокладку маршрута)</fit-text></div>
          </div>
        </div>
        <div class="mapbox">
          <map-canvas></map-canvas>
          <div class="track v"><span class="btn">${arrow(UP)}</span><span class="btn"></span><span class="btn">${arrow(DOWN)}</span></div>
          <div class="track"><span class="btn">${arrow(LEFT)}</span><span class="btn"></span><span class="btn">${arrow(RIGHT)}</span></div>
          <div class="corner"></div>
        </div>
      </div>
      <div class="status">
        <div class="cell"><fit-text w="110">Выбрано 0 элементов</fit-text></div><div class="cell"><fit-text w="165">Шир/долг гггг°мм.ммм'(WGS 84)</fit-text></div><div class="cell"></div><div class="cell"></div>
        <svg class="resize" width="13" height="13" viewBox="0 0 13 13"><path d="M1 13L13 1M5 13L13 5M9 13L13 9" stroke="#808080" stroke-width="1.800"/><path d="M0 12L12 0M3.500 13L13 3.500M7.500 13L13 7.500" stroke="#fff"/></svg>
      </div>
    </div>
    <div class="drop"><div><fit-text w="204">OSM Ленинградская область 2018-05-06</fit-text></div><div><fit-text w="171">OSM Санкт-Петербург 2018-05-11</fit-text></div><div class="sel"><fit-text w="52">Нет карты</fit-text></div></div>
    <mini-map class="mini"></mini-map>`;
  }
}
